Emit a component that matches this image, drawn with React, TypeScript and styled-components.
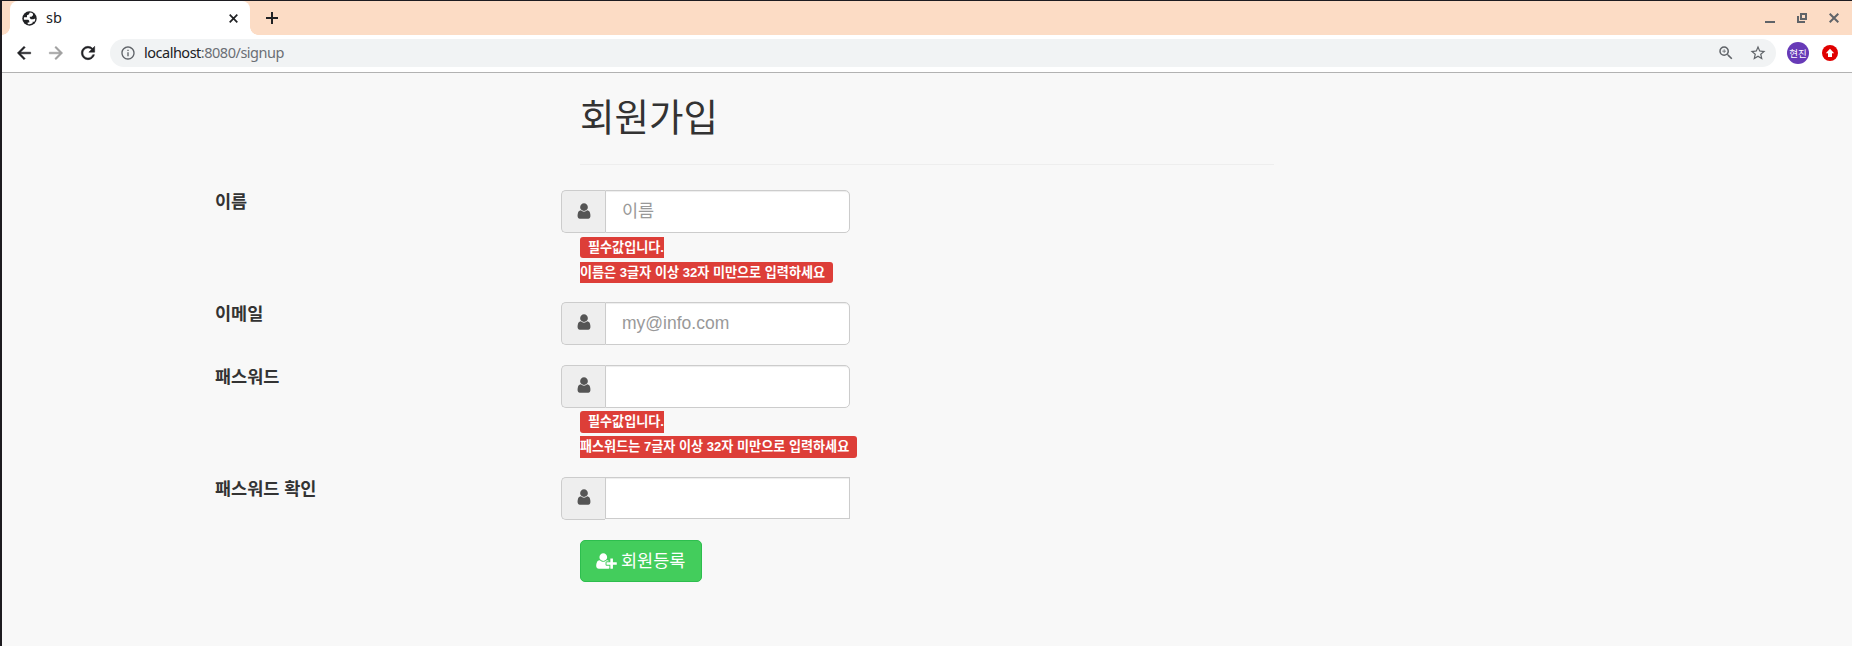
import React from "react";
import styled, { createGlobalStyle } from "styled-components";
import { MdArrowBack, MdArrowForward, MdRefresh, MdOutlineInfo, MdZoomIn, MdStarBorder } from "react-icons/md";

const Global = createGlobalStyle`
  * { box-sizing: border-box; }
  body { margin: 0; background: #f8f8f8; }
`;

const Window = styled.div`
  height: 646px;
  overflow: hidden;
  border-top: 1px solid #1d1b20;
  border-left: 2px solid #1d1b20;
  background: #f8f8f8;
  color: #333;
  font-family: "Liberation Sans", "Noto Sans CJK KR", sans-serif;
  font-size: 17.5px;
  line-height: 25px;
`;

const TabStrip = styled.div`
  display: flex;
  height: 34px;
  padding-left: 8px;
  background: #fcdcc5;
  color: #202124;
`;

const Tab = styled.div`
  position: relative;
  display: flex;
  align-items: center;
  width: 240px;
  padding: 0 12px;
  border-radius: 8px 8px 0 0;
  background: #fff;
  font: 14.5px/20px "Noto Sans", sans-serif;
  &::before, &::after {
    content: "";
    position: absolute;
    bottom: 0;
    width: 8px;
    height: 8px;
  }
  &::before { left: -8px; background: radial-gradient(circle at 0 0, transparent 7.5px, #fff 8px); }
  &::after { right: -8px; background: radial-gradient(circle at 100% 0, transparent 7.5px, #fff 8px); }
`;

const TabTitle = styled.span`
  flex: 1;
  margin: -2px 0 0 9px;
`;

const NewTab = styled.div`
  display: flex;
  align-items: center;
  margin-left: 16px;
`;

const WindowButtons = styled.div`
  display: flex;
  align-items: center;
  gap: 22px;
  margin-left: auto;
  padding-right: 13px;
`;

const Toolbar = styled.div`
  display: flex;
  align-items: center;
  height: 38px;
  padding: 0 14px 1px 12px;
  border-bottom: 1px solid #b2b2b2;
  background: #fff;
  color: #202124;
`;

const NavButton = styled.span<{ $muted?: boolean }>`
  display: flex;
  width: 32px;
  color: ${(p) => (p.$muted ? "#a0a0a0" : "#202124")};
  path:last-child { stroke: currentColor; stroke-width: 0.6px; }
`;

const Address = styled.div`
  display: flex;
  align-items: center;
  flex: 1;
  height: 28px;
  padding: 0 10px;
  border-radius: 14px;
  background: #f1f3f4;
  color: #5f6368;
`;

const Url = styled.span`
  flex: 1;
  margin: -2px 0 0 8px;
  font: 14.5px/20px "Noto Sans", sans-serif;
  letter-spacing: -0.49px;
  color: #6b6f74;
  b { font-weight: 400; color: #202124; }
`;

const AddressIcons = styled.span`
  display: flex;
  align-items: center;
  gap: 14px;
  margin-right: -1px;
`;

const Avatar = styled.span`
  width: 22px;
  height: 22px;
  margin: 0 13px 0 11px;
  border-radius: 50%;
  background: #673ab7;
  color: #fff;
  font: 9.5px/22px "Noto Sans CJK KR", sans-serif;
  text-align: center;
`;

const Page = styled.main`
  padding-left: 213px;
`;

const Heading = styled.h2`
  width: 694px;
  height: 92px;
  margin: 0 0 25px 365px;
  padding-top: 25px;
  border-bottom: 1px solid #eee;
  font-size: 37.5px;
  font-weight: 400;
  line-height: 41px;
`;

const Row = styled.div<{ $loose?: boolean }>`
  display: flex;
  margin-bottom: ${(p) => (p.$loose ? 20 : 19)}px;
`;

const Label = styled.label`
  width: 346px;
  font-weight: 700;
  line-height: 25px;
`;

const Field = styled.div`
  width: 500px;
`;

const InputGroup = styled.div`
  display: flex;
  width: 289px;
  height: 43px;
`;

const Addon = styled.span<{ $low?: boolean }>`
  display: flex;
  justify-content: center;
  width: 44px;
  padding-top: ${(p) => (p.$low ? 10.5 : 10)}px;
  border: 1px solid #ccc;
  border-right: 0;
  border-radius: 5px 0 0 5px;
  background: #eee;
  color: #555;
`;

const Input = styled.input<{ $square?: boolean }>`
  flex: 1;
  min-width: 0;
  height: ${(p) => (p.$square ? 42 : 43)}px;
  padding: 0 16px;
  border: 1px solid #ccc;
  border-radius: ${(p) => (p.$square ? "0" : "0 5px 5px 0")};
  background: #fff;
  box-shadow: inset 0 1px 1px rgba(0, 0, 0, 0.075);
  color: #555;
  font: inherit;
  &::placeholder { color: #999; opacity: 1; }
`;

const Errors = styled.div<{ $tall?: boolean }>`
  display: flex;
  flex-direction: column;
  align-items: flex-start;
  gap: ${(p) => (p.$tall ? 3 : 4)}px;
  padding: ${(p) => (p.$tall ? 3 : 4)}px 0 0 19px;
`;

const ErrorLine = styled.span<{ $last?: boolean; $tall?: boolean }>`
  height: ${(p) => (p.$tall ? 22 : 21)}px;
  padding: ${(p) => (p.$last ? "0 8px 0 0" : "0 0 0 8px")};
  border-radius: ${(p) => (p.$last ? "0 3px 3px 0" : "3px 0 0 3px")};
  background: #dd3e38;
  color: #fff;
  font-size: 13.125px;
  font-weight: 700;
  line-height: 22px;
  white-space: nowrap;
`;

const Submit = styled.button`
  display: flex;
  align-items: center;
  gap: 4px;
  width: 122px;
  height: 42px;
  margin: 0 0 0 365px;
  padding: 0 0 0 15px;
  border: 1px solid #2dbe4e;
  border-radius: 5px;
  background: #43cd5c;
  color: #fff;
  font: inherit;
`;

const GlobeIcon = () => (
  <svg width="15" height="15" viewBox="0 0 15 15">
    <circle cx="7.5" cy="7.5" r="7.2" fill="#202124" />
    <path fill="#fff" d="M7.8 1.6L6.8 3.4 5 4.2v2L2.1 6.3C1.8 7 1.8 8 2 8.8L5.3 8.7c1.3 0 2 .7 2 1.7v1H5.7v1.5c1.8.6 3.6.2 5-.8l-.2-1.3 1.9-.1c.6-.9.9-2 .8-3.1L11.4 8.3H8.900L7.800 7V5.800h1.700L11 4.200V2.700C10.100 2 8.900 1.600 7.800 1.600z" />
  </svg>
);

const UserIcon = () => (
  <svg width="18" height="18" viewBox="0 0 1792 1792" fill="currentColor">
    <path d="M1536 1399q0 109-62.5 187t-150.5 78h-854q-88 0-150.5-78t-62.5-187q0-85 8.5-160.5t31.5-152 58.5-131 94-89 134.5-34.5q131 128 313 128t313-128q76 0 134.5 34.5t94 89 58.5 131 31.5 152 8.5 160.5zm-256-887q0 159-112.5 271.5t-271.5 112.5-271.5-112.5-112.5-271.5 112.5-271.5 271.5-112.5 271.5 112.5 112.5 271.5z" />
  </svg>
);

const UserPlusIcon = () => (
  <svg width="21" height="18" viewBox="0 0 2048 1792" fill="currentColor">
    <path d="M704 896q-159 0-271.5-112.5t-112.5-271.5 112.5-271.5 271.5-112.5 271.5 112.5 112.5 271.5-112.5 271.5-271.5 112.5zm960 128h352q13 0 22.5 9.5t9.5 22.5v192q0 13-9.5 22.5t-22.5 9.5h-352v352q0 13-9.5 22.5t-22.5 9.5h-192q-13 0-22.5-9.5t-9.5-22.5v-352h-352q-13 0-22.5-9.5t-9.5-22.5v-192q0-13 9.5-22.5t22.5-9.5h352v-352q0-13 9.5-22.5t22.5-9.5h192q13 0 22.5 9.5t9.5 22.5v352zm-736 224q0 52 38 90t90 38h256v238q-68 50-171 50h-874q-121 0-194-69t-73-190q0-53 3.5-103.5t14-109 26.5-108.5 43-97.5 62-81 85.5-53.5 111.5-20q19 0 39 17 79 61 154.5 91.5t164.5 30.5 164.5-30.5 154.5-91.5q20-17 39-17 132 0 217 96h-223q-52 0-90 38t-38 90v192z" />
  </svg>
);

const Cross = ({ size, width, color }: { size: number; width: number; color: string }) => (
  <svg width={size} height={size} viewBox={`0 0 ${size} ${size}`} stroke={color} strokeWidth={width}>
    <path d={`M.7 .7L${size - 0.7} ${size - 0.7}M${size - 0.7} .7L.7 ${size - 0.7}`} />
  </svg>
);

interface FieldRow {
  label: string;
  type: string;
  placeholder?: string;
  errors?: string[];
  square?: boolean;
  loose?: boolean;
}

const fields: FieldRow[] = [
  { label: "이름", type: "text", placeholder: "이름", errors: ["필수값입니다.", "이름은 3글자 이상 32자 미만으로 입력하세요"] },
  { label: "이메일", type: "text", placeholder: "my@info.com", loose: true },
  { label: "패스워드", type: "password", errors: ["필수값입니다.", "패스워드는 7글자 이상 32자 미만으로 입력하세요"] },
  { label: "패스워드 확인", type: "password", square: true, loose: true },
];

export default function App() {
  return (
    <Window>
      <Global />
      <TabStrip>
        <Tab>
          <GlobeIcon />
          <TabTitle>sb</TabTitle>
          <Cross size={9} width={1.7} color="#202124" />
        </Tab>
        <NewTab>
          <svg width="12" height="12" viewBox="0 0 12 12" stroke="#202124" strokeWidth="2"><path d="M6 0V12M0 6H12" /></svg>
        </NewTab>
        <WindowButtons>
          <svg width="10" height="10" viewBox="0 0 10 10"><path fill="#5f6368" d="M0 8h10v2H0z" /></svg>
          <svg width="10" height="10" viewBox="0 0 10 10" fill="none" stroke="#5f6368" strokeWidth="2"><path d="M4 1H9V6H4zM1 3V9H8" /></svg>
          <Cross size={10} width={2} color="#5f6368" />
        </WindowButtons>
      </TabStrip>
      <Toolbar>
        <NavButton><MdArrowBack size={20} /></NavButton>
        <NavButton $muted><MdArrowForward size={20} /></NavButton>
        <NavButton><MdRefresh size={20} /></NavButton>
        <Address>
          <MdOutlineInfo size={16} />
          <Url><b>localhost</b>:8080/signup</Url>
          <AddressIcons>
            <MdZoomIn size={18} />
            <MdStarBorder size={18} />
          </AddressIcons>
        </Address>
        <Avatar>현진</Avatar>
        <svg width="16" height="16" viewBox="0 0 16 16"><circle cx="8" cy="8" r="8" fill="#e00000" /><path fill="#fff" d="M8 3.7l4.2 4.6H10V12H6V8.3H3.8z" /></svg>
      </Toolbar>
      <Page>
        <Heading>회원가입</Heading>
        {fields.map((f, row) => (
          <Row key={f.label} $loose={f.loose}>
            <Label>{f.label}</Label>
            <Field>
              <InputGroup>
                <Addon $low={row === 0}><UserIcon /></Addon>
                <Input type={f.type} placeholder={f.placeholder} $square={f.square} />
              </InputGroup>
              {f.errors && (
                <Errors $tall={row > 0}>
                  {f.errors.map((e, i) => (
                    <ErrorLine key={e} $last={i > 0} $tall={row > 0}>{e}</ErrorLine>
                  ))}
                </Errors>
              )}
            </Field>
          </Row>
        ))}
        <Submit><UserPlusIcon />회원등록</Submit>
      </Page>
    </Window>
  );
}
